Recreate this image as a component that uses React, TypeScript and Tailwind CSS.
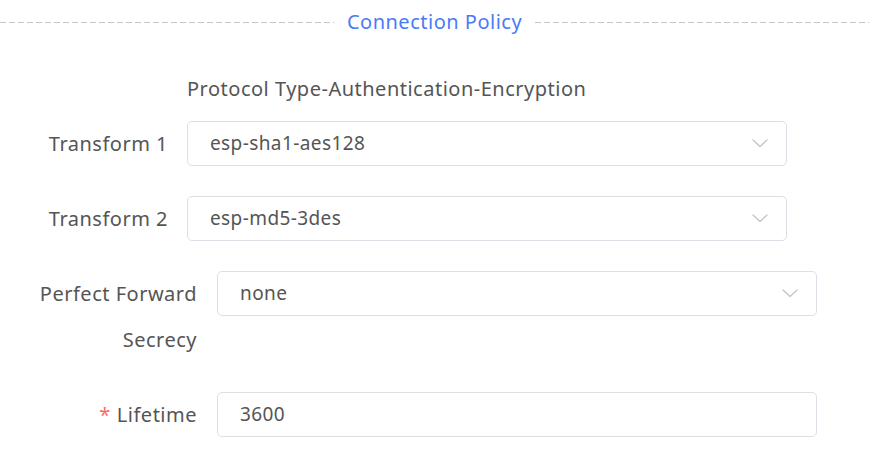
import React from 'react';

const font = { fontFamily: '"Noto Sans", "Open Sans", Arial, sans-serif' };

function Chevron() {
  return (
    <svg width="16" height="9" viewBox="0 0 16 9" fill="none" className="shrink-0">
      <path d="M1 1l7 6.5L15 1" stroke="#c0c4cc" strokeWidth="1.3" strokeLinecap="round" strokeLinejoin="round" />
    </svg>
  );
}

function Field({ value, select = true }: { value: string; select?: boolean }) {
  return (
    <div className="flex h-[45px] w-[600px] items-center justify-between rounded-[5px] border border-[#dcdfe6] bg-white pl-[22px] pr-[18px]">
      <span className="text-[19px] tracking-[0.4px] text-[#555]">{value}</span>
      {select && <Chevron />}
    </div>
  );
}

export default function App() {
  return (
    <div className="h-[472px] w-[869px] overflow-hidden bg-white text-[#555] tracking-[0.5px]" style={font}>
      {/* section title */}
      <div className="flex h-[44px] items-center gap-[13px]">
        <div className="h-px flex-1 bg-[repeating-linear-gradient(90deg,#c8c8c8_0_6px,transparent_6px_9px)]" />
        <span className="text-[20px] text-[#4a7bf7]">Connection Policy</span>
        <div className="h-px flex-1 bg-[repeating-linear-gradient(90deg,#c8c8c8_0_6px,transparent_6px_9px)]" />
      </div>

      <div className="pl-[187px] pt-[30px] text-[20px] leading-[30px]">Protocol Type-Authentication-Encryption</div>

      <div className="mt-[17px] flex items-start">
        <div className="w-[169px] pr-[1px] text-right text-[20px] leading-[45px]">Transform 1</div>
        <div className="ml-[18px]"><Field value="esp-sha1-aes128" /></div>
      </div>

      <div className="mt-[30px] flex items-start">
        <div className="w-[169px] pr-[1px] text-right text-[20px] leading-[45px]">Transform 2</div>
        <div className="ml-[18px]"><Field value="esp-md5-3des" /></div>
      </div>

      <div className="mt-[30px] flex items-start">
        <div className="w-[199px] pr-[2px] text-right text-[20px] leading-[46px]">Perfect Forward Secrecy</div>
        <div className="ml-[18px]"><Field value="none" /></div>
      </div>

      <div className="mt-[29px] flex items-start">
        <div className="w-[199px] pr-[2px] text-right text-[20px] leading-[45px]">
          <span className="mr-[6px] text-[#f56c6c]">*</span>Lifetime
        </div>
        <div className="ml-[18px]"><Field value="3600" select={false} /></div>
      </div>
    </div>
  );
}
